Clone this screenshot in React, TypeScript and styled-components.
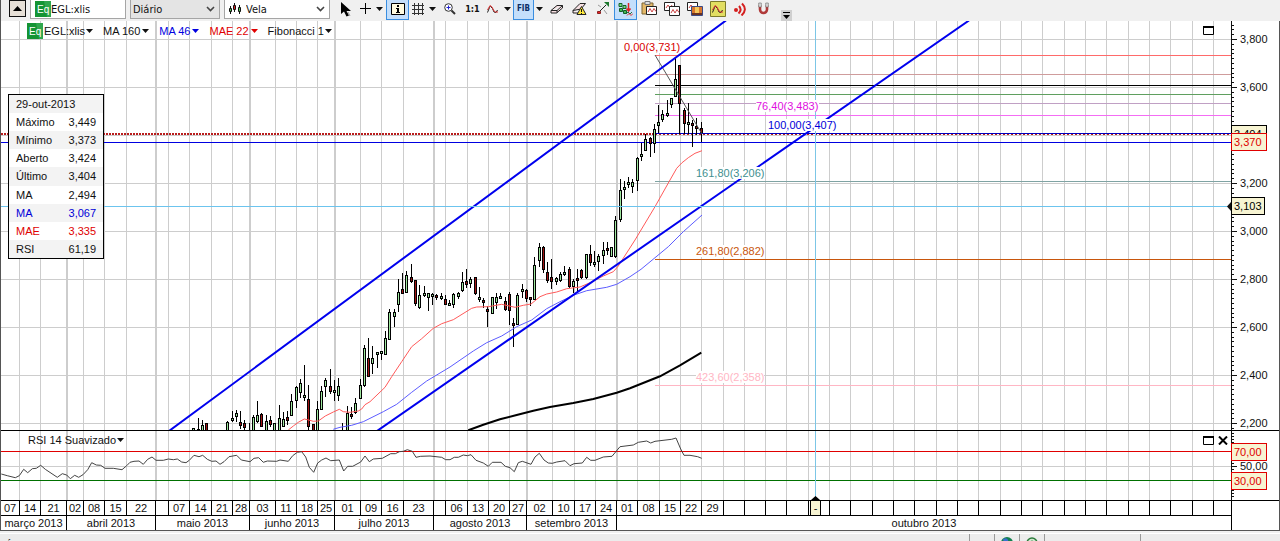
import React from 'react';
import styled, { createGlobalStyle, css } from 'styled-components';

const UI_FONT = '"DejaVu Sans Condensed", "DejaVu Sans", sans-serif';
const CHART_FONT = '"Liberation Sans", Arial, sans-serif';

const GlobalStyle = createGlobalStyle`
  * { box-sizing: border-box; }
  body { margin: 0; background: #f0f0f0; font-family: ${CHART_FONT}; font-size: 11px; color: #111; }
  button, input, select { font: inherit; color: inherit; margin: 0; }
`;

/* ---------- shell ---------- */

const Page = styled.div`
  display: flex;
  flex-direction: column;
  height: 100vh;
  overflow: hidden;
`;

const Toolbar = styled.header`
  flex: none;
  display: flex;
  align-items: flex-start;
  height: 21px;
  padding-left: 8px;
  border-left: 1px solid #555;
  font-family: ${UI_FONT};
  background: #f0f0f0;
`;

const CollapseButton = styled.button`
  width: 17px;
  height: 17px;
  margin-right: 4px;
  padding: 0;
  display: grid;
  place-items: center;
  border: 1px solid #111;
  background: #e6dfd6;
`;

const fieldBox = css`
  display: flex;
  align-items: center;
  height: 19px;
  margin-right: 4px;
  border: 1px solid #a5a5a5;
  border-top: 0;
`;

const SymbolField = styled.label`
  ${fieldBox}
  width: 96px;
  padding-left: 4px;
  background: #fff;
`;

const SymbolInput = styled.input`
  width: 72px;
  padding: 0;
  border: 0;
  outline: 0;
  background: transparent;
`;

const Combo = styled.label<{ $width: number; $shaded?: boolean }>`
  ${fieldBox}
  gap: 4px;
  width: ${p => p.$width}px;
  padding: 0 4px 0 ${p => (p.$shaded ? 2 : 4)}px;
  background: ${p => (p.$shaded ? '#e4e4e4' : '#fff')};

  select {
    flex: 1;
    min-width: 0;
    height: 17px;
    padding: 0;
    border: 0;
    outline: 0;
    appearance: none;
    background: transparent;
  }
`;

const Tools = styled.div`
  display: flex;
`;

const Tool = styled.button<{ $width?: number; $active?: boolean; $ink?: string; $size?: number }>`
  flex: none;
  display: flex;
  align-items: center;
  justify-content: center;
  gap: 5px;
  width: ${p => p.$width ?? 23}px;
  height: 20px;
  padding: 0 0 2px;
  border: 1px solid ${p => (p.$active ? '#3a8ee0' : 'transparent')};
  border-top: 0;
  background: ${p => (p.$active ? '#c4dffb' : 'transparent')};
  font-size: ${p => p.$size ?? 8}px;
  font-weight: bold;
  color: ${p => p.$ink ?? '#0c2f66'};

  svg { flex: none; display: block; }
`;

const Overflow = styled.button`
  align-self: flex-end;
  width: 11px;
  height: 11px;
  margin-left: 6px;
  padding: 0;
  display: grid;
  place-items: center;
  border: 0;
  background: #cfcfcf;
`;

/* ---------- chart frame ---------- */

const Workspace = styled.main`
  flex: none;
  border: solid #555;
  border-width: 0 1px 1px;
  background: #fff;
`;

const Pane = styled.section`
  position: relative;
  display: flex;
  border-bottom: 1px solid #000;
`;

const Plot = styled.div<{ $height: number }>`
  flex: 1;
  min-width: 0;
  height: ${p => p.$height}px;
  svg { display: block; }
`;

const Axis = styled.div`
  flex: none;
  width: 48px;
  svg { display: block; }
`;

const Legend = styled.div`
  position: absolute;
  top: 0;
  left: 26px;
  display: flex;
  align-items: center;
  gap: 10px;
  height: 20px;
`;

const SubLegend = styled(Legend)`
  left: 27px;
  height: 17px;
`;

const LegendItem = styled.button<{ $color?: string; $tight?: boolean }>`
  display: flex;
  align-items: center;
  gap: ${p => (p.$tight ? 1 : 2)}px;
  padding: 0;
  border: 0;
  background: transparent;
  color: ${p => p.$color ?? '#111'};
  white-space: nowrap;
`;

const PaneControls = styled.div`
  position: absolute;
  top: 4px;
  right: 50px;
  display: grid;
  grid-template-columns: 11px 11px;
  gap: 4px;
`;

const PaneButton = styled.button`
  height: 10px;
  padding: 0;
  border: 0;
  background: transparent;
  svg { display: block; }
`;

const InfoTable = styled.table`
  position: absolute;
  top: 73px;
  left: 7px;
  width: 95px;
  height: 165px;
  border: 1px solid #000;
  border-collapse: separate;
  border-spacing: 0;
  background: #fff;

  th, td { padding: 0 7px; font-weight: normal; text-align: left; }
  td { text-align: right; }
  tr:nth-child(odd) { background: #f3f3f3; }
`;

const InfoRow = styled.tr<{ $color?: string }>`
  color: ${p => p.$color ?? '#111'};
`;

const DateRow = styled.div<{ $last?: boolean }>`
  position: relative;
  display: flex;
  height: ${p => (p.$last ? 14 : 15)}px;

  ol {
    flex: 1;
    min-width: 0;
    display: flex;
    margin: 0;
    padding: 0;
    list-style: none;
    border-bottom: ${p => (p.$last ? 0 : 1)}px solid #000;
  }
`;

const DateCell = styled.li<{ $width?: number }>`
  flex: ${p => (p.$width ? `0 0 ${p.$width}px` : '1 1 0')};
  display: flex;
  align-items: center;
  justify-content: center;
  overflow: hidden;
  white-space: nowrap;
  border-right: ${p => (p.$width ? 1 : 0)}px solid #000;
`;

const AxisCorner = styled.div`
  flex: none;
  width: 48px;
  border-left: 1px solid #000;
`;

const DateCursor = styled.span`
  position: absolute;
  top: 0;
  left: 809px;
  width: 11px;
  height: 14px;
  border: solid #000;
  border-width: 0 1px;
  background: #f7f4d2;
  line-height: 14px;
  text-align: center;
`;

const StatusBar = styled.footer`
  display: flex;
  flex: none;
  margin-top: 2px;
  height: 24px;
  border-top: 1px solid #fff;
  background: #ececec;
`;

const StatusCell = styled.div<{ $width?: number }>`
  flex: ${p => (p.$width ? `0 0 ${p.$width}px` : '1 1 0')};
  min-width: 0;
  padding: 5px 5px 0;
  border-left: ${p => (p.$width ? 1 : 0)}px solid #999;
  white-space: nowrap;
  display: flex;
  line-height: 12px;

  span { flex: 0 0 370px; }
  svg { display: block; margin: -2px 0 0 1px; }
`;

/* ---------- data ---------- */

const MONTHS: [number, string][] = [
  [66, 'março 2013'], [155, 'abril 2013'], [249, 'maio 2013'], [334, 'junho 2013'],
  [433, 'julho 2013'], [526, 'agosto 2013'], [616, 'setembro 2013'],
];

const WEEKS: [number, string][] = [
  [19, '07'], [40, '14'], [66, '21'], [83, '02'], [104, '08'], [126, '15'], [155, '22'],
  [168, ''], [189, '07'], [211, '14'], [232, '21'], [249, '28'], [275, '03'], [296, '11'],
  [317, '18'], [334, '25'], [360, '01'], [381, '09'], [403, '16'], [433, '23'], [445, ''],
  [467, '06'], [488, '13'], [509, '20'], [526, '27'], [552, '02'], [574, '10'], [595, '17'],
  [616, '24'], [637, '01'], [659, '08'], [680, '15'], [701, '22'], [723, '29'], [744, ''],
  [765, ''], [786, ''], [808, ''], [829, ''], [850, ''], [872, ''], [893, ''], [914, ''],
  [936, ''], [957, ''], [978, ''], [1000, ''], [1021, ''], [1042, ''], [1064, ''], [1085, ''],
  [1106, ''], [1128, ''], [1149, ''], [1170, ''], [1192, ''], [1213, ''],
];

type Pt = [number, number];

/* Series are recorded on a grid three times finer than the screen, from a local origin. */
const fine = (ox: number, oy: number, pts: Pt[]) =>
  pts.map(([x, y]) => `${(ox + x / 3).toFixed(1)},${(oy + y / 3).toFixed(1)}`).join(' ');

/* x, high, low, body top, body bottom, rising */
type Candle = [number, number, number, number, number, 0 | 1];

const CANDLES: { ox: number; oy: number; rows: Candle[] }[] = [
  {
    ox: 160, oy: 330, rows: [
      [100, 295, 310, 295, 310, 1], [115, 264, 310, 298, 310, 1], [127, 270, 310, 285, 310, 1],
      [140, 280, 310, 280, 310, 0], [202, 274, 310, 277, 310, 1], [217, 243, 276, 265, 274, 1],
      [229, 240, 277, 250, 262, 1], [241, 243, 298, 277, 289, 0], [254, 270, 300, 280, 295, 0],
      [268, 280, 310, 305, 310, 0], [281, 254, 310, 262, 310, 1], [292, 212, 279, 256, 277, 1],
      [305, 250, 292, 253, 292, 0], [319, 256, 310, 274, 310, 1], [331, 258, 292, 271, 284, 0],
      [344, 280, 310, 280, 310, 1], [358, 226, 310, 265, 310, 1], [370, 245, 292, 268, 292, 1],
      [382, 243, 286, 262, 274, 0], [394, 192, 259, 214, 259, 1], [409, 168, 235, 172, 214, 1],
      [421, 146, 205, 160, 190, 1], [433, 104, 214, 196, 203, 1], [446, 165, 310, 208, 292, 0],
      [460, 283, 310, 283, 310, 0], [472, 214, 310, 238, 310, 1], [484, 168, 241, 184, 241, 1],
      [496, 145, 202, 151, 172, 1], [511, 117, 193, 169, 187, 0], [523, 151, 212, 181, 187, 1],
      [535, 145, 214, 169, 199, 1], [548, 280, 310, 308, 310, 0], [562, 229, 310, 250, 310, 1],
      [574, 232, 268, 253, 259, 0], [586, 205, 253, 220, 250, 1], [601, 148, 208, 166, 208, 1],
      [613, 46, 172, 55, 169, 1], [625, 24, 142, 85, 142, 0], [637, 48, 133, 85, 103, 1],
      [652, 66, 115, 66, 73, 1], [664, 62, 90, 64, 71, 1], [676, 3, 76, 25, 76, 1],
    ],
  },
  {
    ox: 340, oy: 230, rows: [
      [148, 237, 331, 247, 331, 1], [163, 237, 292, 247, 262, 1], [175, 148, 247, 187, 226, 1],
      [187, 130, 193, 178, 193, 0], [199, 124, 190, 136, 190, 1], [214, 103, 158, 142, 155, 0],
      [226, 151, 229, 151, 223, 0], [238, 166, 238, 196, 235, 1], [253, 168, 202, 190, 197, 1],
      [265, 190, 244, 190, 205, 1], [277, 190, 226, 192, 200, 1], [289, 192, 210, 196, 205, 0],
      [304, 190, 210, 199, 208, 1], [316, 196, 226, 208, 226, 0], [328, 210, 228, 219, 227, 1],
      [340, 190, 235, 193, 226, 1], [355, 186, 208, 190, 200, 1], [367, 125, 187, 157, 184, 1],
      [379, 117, 175, 154, 166, 0], [391, 141, 175, 148, 163, 1], [406, 142, 196, 142, 193, 0],
      [418, 172, 217, 202, 208, 1], [430, 205, 235, 210, 217, 0], [442, 229, 290, 238, 244, 0],
      [457, 202, 253, 202, 253, 1], [469, 190, 237, 202, 220, 1], [481, 190, 205, 199, 206, 1],
      [496, 202, 243, 214, 241, 0], [508, 187, 284, 193, 244, 0], [520, 265, 350, 280, 287, 0],
      [532, 190, 286, 196, 286, 1], [547, 163, 205, 178, 184, 1], [559, 178, 216, 181, 208, 0],
      [571, 202, 229, 202, 209, 0], [583, 82, 211, 106, 211, 1], [598, 40, 110, 52, 94, 1],
      [610, 48, 130, 52, 121, 0], [622, 96, 160, 127, 154, 0], [634, 87, 178, 142, 157, 0],
      [649, 142, 166, 145, 157, 1], [661, 125, 157, 133, 154, 1], [673, 108, 139, 127, 134, 1],
      [688, 112, 175, 118, 172, 0], [700, 148, 190, 154, 172, 1], [712, 118, 184, 145, 152, 0],
      [724, 117, 148, 121, 145, 0], [739, 72, 148, 73, 145, 1], [751, 45, 108, 73, 100, 0],
      [763, 63, 112, 97, 103, 1], [775, 72, 122, 79, 97, 1], [790, 37, 102, 61, 79, 1],
      [802, 37, 76, 55, 62, 0], [814, 52, 82, 52, 82, 1],
    ],
  },
  {
    ox: 580, oy: 30, rows: [
      [106, 557, 685, 571, 682, 1], [121, 448, 577, 481, 571, 1], [133, 454, 508, 472, 479, 1],
      [145, 442, 475, 457, 466, 1], [157, 446, 488, 457, 472, 1], [172, 380, 482, 385, 454, 1],
      [184, 338, 394, 373, 380, 1], [196, 313, 364, 328, 364, 1], [211, 320, 382, 325, 343, 0],
      [223, 283, 370, 298, 343, 1], [235, 225, 308, 277, 289, 1], [247, 240, 277, 253, 271, 1],
      [262, 210, 262, 250, 256, 1], [274, 205, 235, 205, 226, 1], [286, 80, 202, 148, 202, 1],
      [298, 105, 312, 106, 223, 0], [313, 235, 312, 241, 283, 0], [325, 220, 313, 277, 284, 1],
      [337, 270, 350, 280, 287, 0], [349, 265, 316, 289, 298, 0], [364, 277, 335, 295, 308, 0],
    ],
  },
];

const MAE22 = [
  fine(160, 330, [[385, 300], [400, 288], [415, 277], [433, 267], [446, 270], [460, 274], [475, 273], [496, 258], [520, 246], [538, 238], [550, 245], [570, 247], [595, 243], [605, 237]]),
  fine(340, 230, [[75, 524], [90, 515], [135, 472], [155, 440], [185, 395], [215, 350], [245, 326], [280, 295], [305, 281], [340, 269], [395, 235], [410, 231], [445, 230], [485, 223], [525, 232], [550, 226], [573, 222], [600, 200], [620, 192], [650, 186], [680, 176], [720, 171], [750, 158], [790, 138], [820, 125], [835, 108]]),
  fine(580, 30, [[125, 692], [165, 630], [225, 530], [270, 450], [290, 415], [305, 399], [325, 383], [345, 370], [366, 362]]),
].join(' ');

const MA46 = [
  fine(340, 230, [[-20, 598], [0, 592], [35, 586], [70, 575], [130, 545], [170, 523], [215, 487], [260, 453], [330, 411], [400, 363], [440, 338], [485, 318], [530, 290], [575, 270], [620, 236], [660, 215], [700, 196], [740, 182], [800, 172], [830, 163], [870, 140]]),
  fine(580, 30, [[183, 718], [265, 650], [310, 605], [366, 555]]),
].join(' ');

const MA160 = fine(340, 230, [[385, 601], [430, 584], [480, 568], [530, 555], [580, 542], [630, 531], [700, 519], [760, 507], [830, 488], [870, 475], [900, 463], [960, 439], [1020, 406], [1084, 368]]);

const RSI = [
  fine(0, 425, [[4, 147], [22, 152], [46, 158], [58, 152], [71, 133], [83, 143], [97, 131], [109, 130], [122, 121], [136, 133], [172, 157], [187, 146], [200, 150], [211, 161], [224, 151], [236, 157], [249, 149], [263, 134], [275, 113], [289, 120], [302, 121], [315, 130], [340, 130], [366, 134], [380, 122], [390, 112], [402, 109], [417, 108], [430, 118], [443, 103], [456, 96], [468, 106], [490, 106], [505, 102], [520, 104], [532, 102], [545, 111], [558, 113], [568, 106], [582, 91], [597, 95], [608, 91], [622, 103], [635, 109], [648, 108], [660, 118], [672, 110], [687, 95], [710, 91], [724, 105], [750, 110], [762, 100], [776, 98], [790, 112], [802, 108], [830, 109], [840, 105], [865, 109], [878, 92], [892, 82], [905, 80], [917, 96], [928, 127], [941, 142], [953, 114], [965, 105], [978, 99], [992, 107], [1018, 105], [1031, 138], [1043, 124], [1058, 124], [1082, 111], [1095, 93], [1108, 110], [1120, 102], [1147, 100], [1172, 86], [1186, 86], [1198, 80], [1210, 79]]),
  fine(400, 425, [[22, 74], [37, 79], [48, 97], [62, 94], [90, 93], [125, 97], [137, 104], [150, 104], [163, 97], [175, 97], [190, 90], [202, 92], [213, 89], [228, 106], [250, 114], [265, 124], [277, 112], [303, 112], [316, 124], [330, 128], [343, 140], [355, 113], [367, 109], [393, 118], [405, 96], [418, 85], [432, 105], [445, 114], [457, 115], [470, 111], [495, 107], [510, 122], [522, 116], [547, 114], [560, 97], [572, 106], [585, 106], [610, 96], [636, 94], [660, 65], [700, 60], [715, 52], [740, 48], [752, 54], [765, 49], [815, 43], [828, 39], [842, 72], [852, 91], [870, 91], [893, 95], [905, 100]]),
].join(' ');

const FIB_LEVELS: [number, string][] = [
  [55, '#ff6a6a'], [74, '#cf9c9c'], [85, '#000'], [94, '#5f9f5f'], [103, '#c0a0c4'],
  [115, '#f46cf4'], [133, '#0000c0'], [181, '#7fa3a3'], [259, '#c8560c'], [385, '#ffb6c4'],
];

const FIB_LABELS: [number, number, number, string, string][] = [
  [624, 51, 57, '0,00(3,731)', '#d80000'],
  [756, 110, 63, '76,40(3,483)', '#e010e0'],
  [768, 129, 68, '100,00(3,407)', '#0000d8'],
  [696, 177, 68, '161,80(3,206)', '#3f8f8f'],
  [696, 255, 68, '261,80(2,882)', '#c8560c'],
  [696, 381, 68, '423,60(2,358)', '#ffb6c4'],
];

const INFO: [string, string, string?][] = [
  ['Máximo', '3,449'], ['Mínimo', '3,373'], ['Aberto', '3,424'], ['Último', '3,404'],
  ['MA', '2,494'], ['MA', '3,067', '#0000d8'], ['MAE', '3,335', '#e00000'], ['RSI', '61,19'],
];

/* ---------- drawings ---------- */

const Caret = ({ color = '#111' }: { color?: string }) => (
  <svg width="7" height="4" viewBox="0 0 7 4" aria-hidden="true"><path d="M0 0h7L3.500 4z" fill={color} /></svg>
);

const Chevron = () => (
  <svg width="9" height="6" viewBox="0 0 9 6" aria-hidden="true">
    <path d="M1 1l3.500 3.500L8 1" fill="none" stroke="#444" strokeWidth="1.600" />
  </svg>
);

const EqBadge = () => (
  <svg width="16" height="16" viewBox="0 0 16 16" aria-hidden="true">
    <rect width="16" height="16" fill="#149434" />
    <path d="M9 0h7v16h-4z" fill="#4bb765" opacity=".5" />
    <text x="2" y="12" fontFamily="Liberation Sans, sans-serif" fontSize="10" fill="#fff">Eq</text>
  </svg>
);

const Pic = ({ w = 16, h = 16, children }: { w?: number; h?: number; children: React.ReactNode }) => (
  <svg width={w} height={h} viewBox={`0 0 ${w} ${h}`} fill="none" aria-hidden="true">{children}</svg>
);

const CandlesIcon = () => (
  <Pic w={13} h={12}>
    <path d="M1.500 3v8M5.500 0v9M10.500 2v9" stroke="#111" />
    <path d="M0.500 5.500h2v3h-2z" fill="#57c757" stroke="#111" />
    <path d="M4.500 2.500h2v4h-2z" fill="#d22" stroke="#111" />
    <path d="M9.500 4.500h2v4h-2z" fill="#57c757" stroke="#111" />
  </Pic>
);
const ArrowIcon = () => (
  <Pic w={12}><path d="M1 1v12l3-2.500 2.500 5L9 14.500 6.500 10H11z" fill="#000" /><path d="M8 11l2 4" stroke="#999" /></Pic>
);
const PlusIcon = () => <Pic w={11} h={11}><path d="M5.500 0v11M0 5.500h11" stroke="#000" /></Pic>;
const InfoIcon = () => (
  <Pic w={14} h={12}>
    <path d="M.5.5h13v11H.5z" fill="#fffbe0" stroke="#000" />
    <path d="M6 2h2v2H6zM5 5h3v4h1v1H5V9h1V6H5z" fill="#000" />
  </Pic>
);
const GridIcon = () => (
  <Pic w={12} h={12}><path d="M2.500 0v12M6.500 0v12M10.500 0v12M0 2.500h12M0 6.500h12M0 10.500h12" stroke="#333" /></Pic>
);
const ZoomIcon = () => (
  <Pic w={12} h={12}>
    <circle cx="4.500" cy="4.500" r="3.800" fill="#fff" stroke="#333" />
    <path d="M4.500 2.500v4M2.500 4.500h4" stroke="#2020d0" />
    <path d="M7.500 7.500l3.500 3.500" stroke="#333" strokeWidth="2" />
  </Pic>
);
const Wave = ({ x = 0, y = 0 }: { x?: number; y?: number }) => (
  <g transform={`translate(${x} ${y})`}>
    <path d="M.5 7.500L2.500 2.500L3.500 1.500L5.500 3.500L7 7L9 7.500L10.500 5" stroke="#222" />
    <path d="M.5 5L3 .5L5 2L7 6L8.500 7L11 7" stroke="#d33" />
  </g>
);
const CurveIcon = () => <Pic w={12} h={10}><Wave y={1} /></Pic>;
const EraserIcon = () => (
  <Pic w={14} h={10}>
    <path d="M1 6.500L7 1.500h5.500L7 6.500zM1 6.500v2.500h5.500L12.500 4V1.500M7 6.500V9" fill="#f6dfe2" stroke="#222" />
  </Pic>
);
const EraserWarnIcon = () => (
  <Pic w={15} h={13}>
    <path d="M1 8.500L8 1.500h5.500L9 7zM1 8.500v2.500h5" fill="#f6dfe2" stroke="#222" />
    <path d="M9.500 4.500l4.500 8H5z" fill="#ffe93c" stroke="#222" />
    <path d="M9.500 7v3M9.500 11v1" stroke="#111" />
  </Pic>
);
const LineToolIcon = () => (
  <Pic w={13} h={13}>
    <path d="M3 10L10 3" stroke="#222" />
    <path d="M8 0h5v5z" fill="#1f7a30" />
    <path d="M1.500 9.500h3v2h-3z" fill="#e22" stroke="#822" />
    <path d="M8 8l3 4M5 5L2 3" stroke="#999" />
  </Pic>
);
const LayersIcon = () => (
  <Pic w={15} h={14}>
    <path d="M1 1.500h3v3H1zM5 3.500h3v3H5z" fill="#6fdc7b" stroke="#14602a" />
    <path d="M1.500 6.500h3v3h-3zM5.500 8.500h3v3h-3z" fill="#45b955" stroke="#14602a" />
    <path d="M10.500 1v7M8.500 6.500l2 2.500 2-2.500" stroke="#d22" strokeWidth="1.500" />
    <path d="M8 12l2-2 2 2 2-2" stroke="#2a6f3c" />
    <path d="M9 13.500l2-2 2 2 2-2" stroke="#d33" />
  </Pic>
);
const PasteIcon = () => (
  <Pic w={16} h={15}>
    <path d="M1 2h11v11H1z" fill="#e3b868" stroke="#7d6433" />
    <path d="M4 .5h5v3H4z" fill="#ddd" stroke="#777" />
    <path d="M5.500 5.500h10v8h-10z" fill="#fff" stroke="#222" />
    <path d="M7 11l2-3.500 2 3.500 2-3.500 2 3" stroke="#c44" />
  </Pic>
);
const CopyIcon = () => (
  <Pic w={16} h={14}>
    <path d="M.5.5h10v8H.5z" fill="#fff" stroke="#222" />
    <path d="M2 6l2-3 2 3 2-3" stroke="#c44" />
    <path d="M5.500 4.500h10v9h-10z" fill="#fff" stroke="#222" />
    <path d="M7 11l2-3.500 2 3.500 2-3.500 2 3" stroke="#c44" />
  </Pic>
);
const ImageIcon = () => (
  <Pic w={16} h={14}>
    <path d="M.5.5h10v8H.5z" fill="#fff" stroke="#222" />
    <path d="M2 6l2-3 2 3" stroke="#c44" />
    <path d="M4.500 4.500h11v9h-11z" fill="#d9762c" stroke="#3c4a86" />
    <path d="M8 5h4v8H8z" fill="#f7c85c" />
    <path d="M5 11h10v2H5z" fill="#6a3322" />
  </Pic>
);
const NoteIcon = () => (
  <Pic w={16} h={16}>
    <path d="M.5.5h15v15H.5z" fill="#e2de62" stroke="#7c7a2c" />
    <Wave x={2} y={4} />
  </Pic>
);
const SoundIcon = () => (
  <Pic w={14} h={14}>
    <circle cx="2" cy="8" r="2" fill="#d42020" />
    <path d="M5 4q3.500 4-.5 7.500M8 1.500q6 6-.5 12" stroke="#d42020" strokeWidth="2" />
  </Pic>
);
const MagnetIcon = () => (
  <Pic w={11} h={13}>
    <path d="M2 3v4.500a3.500 3.500 0 0 0 7 0V3" stroke="#b03a3a" strokeWidth="2.600" />
    <path d="M.7 1h2.600v4H.7zM7.700 1h2.600v4H7.700z" fill="#ddd" stroke="#666" strokeWidth=".6" />
  </Pic>
);

const MaximizeIcon = () => (
  <Pic w={11} h={9}><path d="M.5.5h10v8H.5z" fill="#fff" stroke="#000" /><path d="M0 1h11" stroke="#000" strokeWidth="2" /></Pic>
);
const CloseIcon = () => (
  <Pic w={10} h={9}><path d="M1 .5l8 8M9 .5l-8 8" stroke="#000" strokeWidth="2" /></Pic>
);

const GridLines = ({ height }: { height: number }) => {
  const months = MONTHS.map(([x]) => x);
  return (
    <g fill="#cdcdcd">
      {WEEKS.map(([x]) => (
        <rect key={x} x={x} y={0} width={months.includes(x) ? 2 : 1} height={height} />
      ))}
    </g>
  );
};

const Candles = () => (
  <g shapeRendering="crispEdges">
    {CANDLES.flatMap(({ ox, oy, rows }) =>
      rows.map(([cx, high, low, top, bottom, up]) => {
        const x = ox + Math.floor(cx / 3);
        const y = (v: number) => oy + Math.round(v / 3);
        const height = Math.max(3, y(bottom) - y(top));
        return (
          <g key={x}>
            <rect x={x} y={y(high)} width={1} height={y(low) - y(high)} fill="#000" />
            <rect x={x - 1} y={y(top)} width={3} height={height} fill="#000" />
            <rect x={x} y={y(top) + 1} width={1} height={height - 2} fill={up ? '#9fe89f' : '#a01414'} />
          </g>
        );
      }),
    )}
  </g>
);

const PricePlot = () => (
  <svg width="100%" height="409" role="img" aria-label="EGL:xlis">
    {/* drawing coordinates are window coordinates; the pane starts at (1, 21) */}
    <g transform="translate(-1 -21)">
      <GridLines height={430} />
      {[39, 87, 135, 183, 231, 279, 327, 375, 423].map(y => (
        <rect key={y} x={1} y={y} width="100%" height={1} fill="#cdcdcd" />
      ))}
      {FIB_LEVELS.map(([y, color]) => (
        <rect key={y} x={655} y={y} width="100%" height={1} fill={color} />
      ))}
      <rect x={1} y={142} width="100%" height={1} fill="#0000e0" />
      <path d="M1 134h654" stroke="#b81c1c" strokeWidth="2" strokeDasharray="2 1" />
      <path d="M655 134.500h1400" stroke="#b81c1c" strokeDasharray="2 2" />
      <Candles />
      <polyline points={MAE22} fill="none" stroke="#ff5a5a" />
      <polyline points={MA46} fill="none" stroke="#5c5cff" />
      <polyline points={MA160} fill="none" stroke="#000" strokeWidth="2" />
      <path d="M655 55l47 79" stroke="#555" />
      <path d="M169 431L726 20.500M377 431L969 20.500" stroke="#0000ee" strokeWidth="2" fill="none" />
      <rect x={1} y={206} width="100%" height={1} fill="#6cc4ee" />
      <rect x={815} y={21} width={1} height={409} fill="#7cc6e6" />
      {FIB_LABELS.map(([x, y, width, text, color]) => (
        <g key={text}>
          <rect x={x} y={y - 10} width={width} height={12} fill="#fff" />
          <text x={x} y={y} fill={color}>{text}</text>
        </g>
      ))}
    </g>
  </svg>
);

const PRICES = ['3,800', '3,600', '', '3,200', '3,000', '2,800', '2,600', '2,400', '2,200'];

const Badge = ({ y, text, color, width = 35 }: { y: number; text: string; color: string; width?: number }) => (
  <g>
    <rect x={0.5} y={y + 0.5} width={width} height={17} fill="#f7f4d2" stroke={color} />
    <text x={3} y={y + 13} fill={color}>{text}</text>
  </g>
);

const PriceAxis = () => (
  <svg width="48" height="409" fill="#111" overflow="visible">
    <rect width={1} height={409} />
    {Array.from({ length: 85 }, (_, i) => {
      const y = Math.round(18 + (i - 3) * 4.8);
      return <rect key={i} x={1} y={y} width={(i - 3) % 10 === 0 ? 5 : 2} height={1} />;
    })}
    {PRICES.map((p, i) => <text key={i} x={9} y={22 + i * 48}>{p}</text>)}
    <Badge y={104} text="3,404" color="#000" />
    <Badge y={112} text="3,370" color="#e00000" />
    <Badge y={176} text="3,103" color="#000" width={33} />
    <path d="M0 181v9l-4-4.500z" />
  </svg>
);

const RsiPlot = () => (
  <svg width="100%" height="69" role="img" aria-label="RSI 14">
    <g transform="translate(-1 -431)">
      <g transform="translate(0 431)"><GridLines height={69} /></g>
      <rect x={1} y={466} width="100%" height={1} fill="#cdcdcd" />
      <rect x={1} y={451} width="100%" height={1} fill="#e00000" />
      <rect x={1} y={480} width="100%" height={1} fill="#007000" />
      <rect x={815} y={431} width={1} height={69} fill="#7cc6e6" />
      <polyline points={RSI} fill="none" stroke="#444" />
      <path d="M811 500l4.500-4 4.500 4z" fill="#000" />
    </g>
  </svg>
);

const RsiAxis = () => (
  <svg width="48" height="69" fill="#111">
    <rect width={1} height={69} />
    {Array.from({ length: 22 }, (_, i) => <rect key={i} x={1} y={2 + i * 3} width={2} height={1} />)}
    <rect x={1} y={35} width={5} height={1} />
    <text x={9} y={39}>50,00</text>
    <Badge y={12} text="70,00" color="#e00000" />
    <Badge y={41} text="30,00" color="#e00000" />
  </svg>
);

const cells = (marks: [number, string][]) =>
  marks.map(([end, label], i) => {
    const start = i === 0 ? 0 : marks[i - 1][0];
    return <DateCell key={end} $width={end - start}>{label}</DateCell>;
  });

/* ---------- app ---------- */

export default function App() {
  return (
    <Page>
      <GlobalStyle />
      <Toolbar>
        <CollapseButton aria-label="Recolher">
          <svg width="9" height="5" viewBox="0 0 9 5"><path d="M0 5h9L4.500 0z" /></svg>
        </CollapseButton>
        <SymbolField>
          <EqBadge />
          <SymbolInput aria-label="Símbolo" defaultValue="EGL:xlis" />
        </SymbolField>
        <Combo $width={90} $shaded>
          <select aria-label="Período"><option>Diário</option></select>
          <Chevron />
        </Combo>
        <Combo $width={106}>
          <CandlesIcon />
          <select aria-label="Tipo de gráfico"><option>Vela</option></select>
          <Chevron />
        </Combo>
        <Tools>
          <Tool aria-label="Selecionar"><ArrowIcon /></Tool>
          <Tool $width={29} aria-label="Cursor"><PlusIcon /><Caret /></Tool>
          <Tool $active aria-label="Informação"><InfoIcon /></Tool>
          <Tool $width={29} aria-label="Grelha"><GridIcon /><Caret /></Tool>
          <Tool aria-label="Ampliar"><ZoomIcon /></Tool>
          <Tool $ink="#111" $size={9}>1:1</Tool>
          <Tool $width={29} aria-label="Indicadores"><CurveIcon /><Caret /></Tool>
          <Tool $width={21} $active>FIB</Tool>
          <Tool $width={11} aria-label="Opções Fibonacci"><Caret /></Tool>
          <Tool aria-label="Apagar"><EraserIcon /></Tool>
          <Tool aria-label="Apagar tudo"><EraserWarnIcon /></Tool>
          <Tool aria-label="Linha"><LineToolIcon /></Tool>
          <Tool $active aria-label="Camadas"><LayersIcon /></Tool>
          <Tool aria-label="Colar"><PasteIcon /></Tool>
          <Tool aria-label="Copiar"><CopyIcon /></Tool>
          <Tool aria-label="Imagem"><ImageIcon /></Tool>
          <Tool aria-label="Nota"><NoteIcon /></Tool>
          <Tool aria-label="Alerta"><SoundIcon /></Tool>
          <Tool aria-label="Íman"><MagnetIcon /></Tool>
        </Tools>
        <Overflow aria-label="Mais">
          <svg width="7" height="7" viewBox="0 0 7 7"><path d="M0 0h7v1H0zM0 3h7L3.500 7z" /></svg>
        </Overflow>
      </Toolbar>

      <Workspace>
        <Pane>
          <Plot $height={409}><PricePlot /></Plot>
          <Axis><PriceAxis /></Axis>
          <Legend>
            <LegendItem $tight><EqBadge />EGL:xlis<Caret /></LegendItem>
            <LegendItem>MA 160 <Caret /></LegendItem>
            <LegendItem $color="#0000e0">MA 46 <Caret color="#0000e0" /></LegendItem>
            <LegendItem $color="#e00000">MAE 22 <Caret color="#e00000" /></LegendItem>
            <LegendItem $tight>Fibonacci 1<Caret /></LegendItem>
          </Legend>
          <PaneControls>
            <PaneButton aria-label="Maximizar"><MaximizeIcon /></PaneButton>
          </PaneControls>
          <InfoTable>
            <tbody>
              <tr><th colSpan={2}>29-out-2013</th></tr>
              {INFO.map(([name, value, color], i) => (
                <InfoRow key={i} $color={color}><th scope="row">{name}</th><td>{value}</td></InfoRow>
              ))}
            </tbody>
          </InfoTable>
        </Pane>

        <Pane>
          <Plot $height={69}><RsiPlot /></Plot>
          <Axis><RsiAxis /></Axis>
          <SubLegend>
            <LegendItem $tight>RSI 14 Suavizado<Caret /></LegendItem>
          </SubLegend>
          <PaneControls>
            <PaneButton aria-label="Maximizar"><MaximizeIcon /></PaneButton>
            <PaneButton aria-label="Fechar"><CloseIcon /></PaneButton>
          </PaneControls>
        </Pane>

        <DateRow>
          <ol>{cells(WEEKS)}<DateCell /></ol>
          <AxisCorner />
          <DateCursor>-</DateCursor>
        </DateRow>
        <DateRow $last>
          <ol>{cells(MONTHS)}<DateCell>outubro 2013</DateCell></ol>
          <AxisCorner />
        </DateRow>
      </Workspace>

      <StatusBar>
        <StatusCell>
          <span>Últimos dados oficiais da bolsa</span>
          <span>dados oficiais da bolsa de Lisboa</span>
        </StatusCell>
        <StatusCell $width={25} />
        <StatusCell $width={25}>
          <svg width="12" height="12" viewBox="0 0 12 12"><circle cx="6" cy="6" r="6" fill="#12804e" /><path d="M2 2q4-2 5 1t-4 3z" fill="#3a6fd0" /></svg>
        </StatusCell>
        <StatusCell $width={25}>
          <svg width="12" height="12" viewBox="0 0 12 12"><circle cx="6" cy="6" r="5" fill="#cfe9cf" stroke="#2a7a3a" strokeWidth="1.500" /><circle cx="6" cy="6" r="2" fill="none" stroke="#2a7a3a" /></svg>
        </StatusCell>
        <StatusCell $width={96}>Atualizado</StatusCell>
        <StatusCell $width={140}>conta real</StatusCell>
      </StatusBar>
    </Page>
  );
}
